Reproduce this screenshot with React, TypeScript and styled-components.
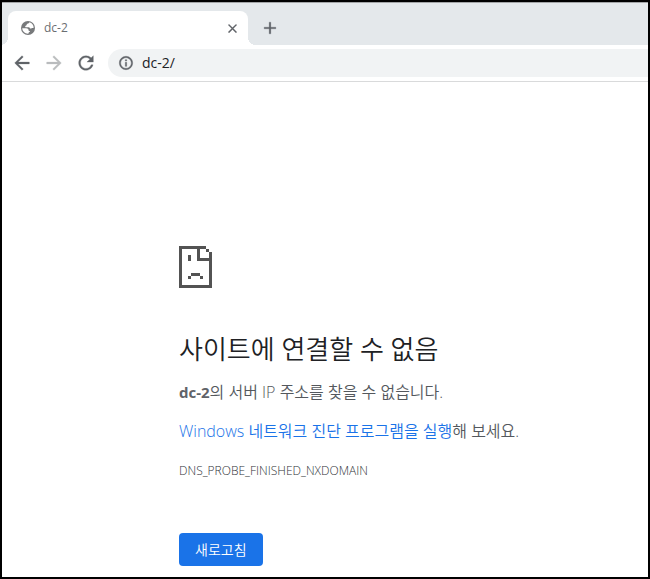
import React from "react";
import styled, { createGlobalStyle } from "styled-components";
import { MdAdd, MdArrowBack, MdArrowForward, MdClose, MdInfoOutline, MdRefresh } from "react-icons/md";

const GlobalStyle = createGlobalStyle`
  *, *::before, *::after { box-sizing: border-box; }
  body { margin: 0; background: #fff; }
  button, input { font: inherit; }
  html { font-family: "Open Sans", "Noto Sans CJK KR", sans-serif; }
`;

const Window = styled.div`
  display: flex;
  flex-direction: column;
  min-height: 100vh;
  overflow: hidden;
  border: 2px solid #000;
  background: #fff;
`;

const TabStrip = styled.header`
  display: flex;
  align-items: flex-end;
  height: 43px;
  padding-left: 6px;
  border-top: 1px solid #a3a5a7;
  background: #e4e8eb;
`;

const Tab = styled.div`
  position: relative;
  display: flex;
  align-items: center;
  width: 240px;
  height: 34px;
  padding: 0 8px 0 12px;
  border-radius: 8px 8px 0 0;
  background: #fff;

  &::before,
  &::after {
    content: "";
    position: absolute;
    bottom: 0;
    width: 8px;
    height: 8px;
  }
  &::before {
    right: 100%;
    background: radial-gradient(circle at 0 0, transparent 8px, #fff 8px);
  }
  &::after {
    left: 100%;
    background: radial-gradient(circle at 100% 0, transparent 8px, #fff 8px);
  }
`;

const TabTitle = styled.span`
  flex: 1;
  margin-left: 8px;
  font-size: 12px;
  line-height: 16px;
  color: #6b6e72;
`;

const IconButton = styled.button<{ $size: number }>`
  display: flex;
  align-items: center;
  justify-content: center;
  flex: none;
  width: ${(p) => p.$size}px;
  height: ${(p) => p.$size}px;
  padding: 0;
  border: 0;
  border-radius: 50%;
  background: none;
  color: #5f6368;

  path:not([fill="none"]) { stroke-width: 0.3; }
  path[fill="none"] { stroke: none; }
  &:disabled { color: #babcbe; }
`;

const NewTab = styled(IconButton)`
  margin: 0 0 3px 8px;
`;

const Toolbar = styled.nav`
  display: flex;
  align-items: center;
  gap: 4px;
  height: 37px;
  padding-left: 6px;
  border-bottom: 1px solid #d9dadb;
`;

const AddressBar = styled.label`
  display: flex;
  flex: 1;
  align-items: center;
  gap: 8px;
  min-width: 0;
  height: 28px;
  margin-left: 4px;
  padding-left: 10px;
  border-radius: 14px 0 0 14px;
  background: #f1f3f4;
  color: #5f6368;

  path:not([fill="none"]) { stroke-width: 0.6; }
  path[fill="none"] { stroke: none; }
`;

const AddressInput = styled.input`
  flex: 1;
  min-width: 0;
  padding: 0;
  border: 0;
  outline: 0;
  background: none;
  font-size: 14px;
  line-height: 20px;
  color: #202124;
`;

const Page = styled.main`
  flex: 1;
  padding: 164px 16px 11px 177px;
  font-size: 16px;
  font-weight: 350;
  line-height: 24px;
  color: #54585d;
`;

const SadPage = styled.svg`
  display: block;
  width: 33px;
  height: 42px;
  fill: #535353;
`;

const Title = styled.h1`
  margin: 43px 0 13px;
  font-size: 26px;
  font-weight: 350;
  line-height: 36px;
  color: #202124;
`;

const Text = styled.p`
  margin: 0 0 15px;
`;

const Host = styled.strong`
  font-size: 15px;
  font-weight: 700;
  color: #5f6368;
`;

const Link = styled.a`
  color: #1a73e8;
  text-decoration: none;
`;

const ErrorCode = styled.div`
  padding-top: 1px;
  font-size: 12px;
  color: #303337;
`;

const Reload = styled.button`
  height: 33px;
  margin-top: 50px;
  padding: 0 16px;
  border: 0;
  border-radius: 4px;
  background: #1a73e8;
  font-size: 14px;
  font-weight: 350;
  line-height: 20px;
  color: #fff;
`;

const Globe = () => (
  <svg width="16" height="16" viewBox="0 0 16 16" aria-hidden="true">
    <circle cx="8" cy="8" r="7" fill="#77797b" />
    <path
      fill="#fff"
      d="M9.300 2.300c-.2 1.100-1 1.300-1.900 1.500-.8.200-.6 1-.9 1.500-.4.500-1.300.400-1.300 1.100 0 .6.700.8 1.500.8h2.200c.9 0 .9 1.400 1.800 1.400.7 0 1.100-.6 1.800-.6h1.100c.3-2.600-1.400-5-4.300-5.700z"
    />
    <path
      fill="#fff"
      d="M2.200 8.300h4c1.500 0 2.300.7 2.300 1.700 0 .7.500 1 1.300 1v1c-.8 0-1.400.5-1.400 1.700-3.300.2-6-2.200-6.200-5.400z"
    />
  </svg>
);

export default function App() {
  return (
    <>
      <GlobalStyle />
      <Window>
        <TabStrip>
          <Tab>
            <Globe />
            <TabTitle>dc-2</TabTitle>
            <IconButton $size={16} aria-label="탭 닫기"><MdClose size={15} /></IconButton>
          </Tab>
          <NewTab $size={28} aria-label="새 탭"><MdAdd size={20} /></NewTab>
        </TabStrip>
        <Toolbar>
          <IconButton $size={28} aria-label="뒤로"><MdArrowBack size={22} /></IconButton>
          <IconButton $size={28} aria-label="앞으로" disabled><MdArrowForward size={22} /></IconButton>
          <IconButton $size={28} aria-label="새로고침"><MdRefresh size={22} /></IconButton>
          <AddressBar>
            <MdInfoOutline size={16} />
            <AddressInput aria-label="주소창" defaultValue="dc-2/" />
          </AddressBar>
        </Toolbar>
        <Page>
          <SadPage viewBox="0 0 11 14" shapeRendering="crispEdges" aria-hidden="true">
            <path d="M0 0h9v1H7v3h3V2h1v12H0zM1 1v12h9V5H6V1zM9 1h1v1H9zM3 3h1v2H3zM4 9h3v1H4zM3 10h1v1H3zM7 10h1v1H7z" fillRule="evenodd" />
          </SadPage>
          <Title>사이트에 연결할 수 없음</Title>
          <Text><Host>dc-2</Host>의 서버 IP 주소를 찾을 수 없습니다.</Text>
          <Text><Link href="#diagnose">Windows 네트워크 진단 프로그램을 실행</Link>해 보세요.</Text>
          <ErrorCode>DNS_PROBE_FINISHED_NXDOMAIN</ErrorCode>
          <Reload>새로고침</Reload>
        </Page>
      </Window>
    </>
  );
}
